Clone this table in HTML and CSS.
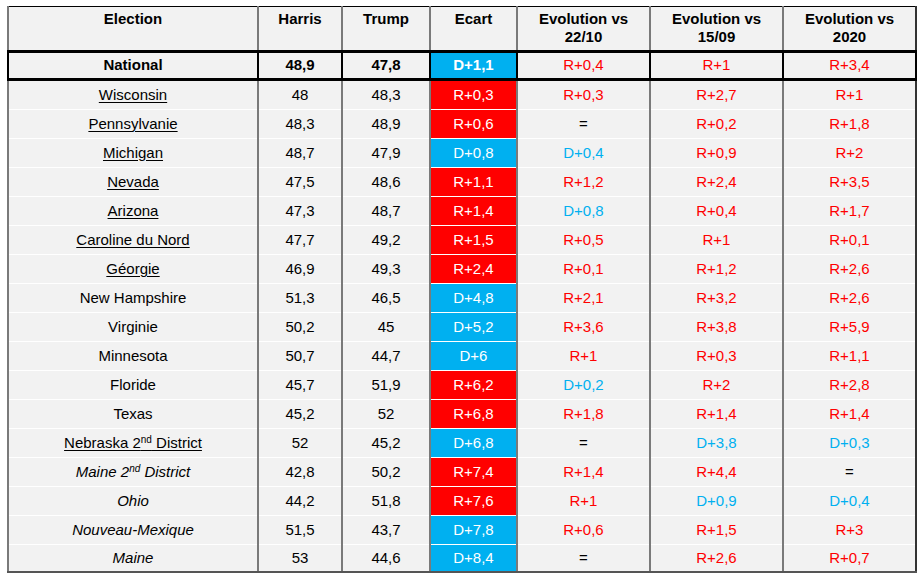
FILE: index.html
```html
<!DOCTYPE html>
<html lang="fr">
<head>
<meta charset="utf-8">
<title>Sondages</title>
<link rel="stylesheet" href="styles.css">
</head>
<body>
<table class="polls">
  <colgroup>
    <col class="c-name"><col class="c-h"><col class="c-t"><col class="c-e"><col class="c-v"><col class="c-v"><col class="c-v">
  </colgroup>
  <thead>
    <tr>
      <th>Election</th><th>Harris</th><th>Trump</th><th>Ecart</th>
      <th>Evolution vs<br>22/10</th><th>Evolution vs<br>15/09</th><th>Evolution vs<br>2020</th>
    </tr>
  </thead>
  <tbody>
    <tr class="national">
      <td>National</td><td>48,9</td><td>47,8</td><td class="gap d">D+1,1</td><td class="r">R+0,4</td><td class="r">R+1</td><td class="r">R+3,4</td>
    </tr>
    <tr><td><u>Wisconsin</u></td><td>48</td><td>48,3</td><td class="gap r">R+0,3</td><td class="r">R+0,3</td><td class="r">R+2,7</td><td class="r">R+1</td></tr>
    <tr><td><u>Pennsylvanie</u></td><td>48,3</td><td>48,9</td><td class="gap r">R+0,6</td><td>=</td><td class="r">R+0,2</td><td class="r">R+1,8</td></tr>
    <tr><td><u>Michigan</u></td><td>48,7</td><td>47,9</td><td class="gap d">D+0,8</td><td class="d">D+0,4</td><td class="r">R+0,9</td><td class="r">R+2</td></tr>
    <tr><td><u>Nevada</u></td><td>47,5</td><td>48,6</td><td class="gap r">R+1,1</td><td class="r">R+1,2</td><td class="r">R+2,4</td><td class="r">R+3,5</td></tr>
    <tr><td><u>Arizona</u></td><td>47,3</td><td>48,7</td><td class="gap r">R+1,4</td><td class="d">D+0,8</td><td class="r">R+0,4</td><td class="r">R+1,7</td></tr>
    <tr><td><u>Caroline du Nord</u></td><td>47,7</td><td>49,2</td><td class="gap r">R+1,5</td><td class="r">R+0,5</td><td class="r">R+1</td><td class="r">R+0,1</td></tr>
    <tr><td><u>Géorgie</u></td><td>46,9</td><td>49,3</td><td class="gap r">R+2,4</td><td class="r">R+0,1</td><td class="r">R+1,2</td><td class="r">R+2,6</td></tr>
    <tr><td>New Hampshire</td><td>51,3</td><td>46,5</td><td class="gap d">D+4,8</td><td class="r">R+2,1</td><td class="r">R+3,2</td><td class="r">R+2,6</td></tr>
    <tr><td>Virginie</td><td>50,2</td><td>45</td><td class="gap d">D+5,2</td><td class="r">R+3,6</td><td class="r">R+3,8</td><td class="r">R+5,9</td></tr>
    <tr><td>Minnesota</td><td>50,7</td><td>44,7</td><td class="gap d">D+6</td><td class="r">R+1</td><td class="r">R+0,3</td><td class="r">R+1,1</td></tr>
    <tr><td>Floride</td><td>45,7</td><td>51,9</td><td class="gap r">R+6,2</td><td class="d">D+0,2</td><td class="r">R+2</td><td class="r">R+2,8</td></tr>
    <tr><td>Texas</td><td>45,2</td><td>52</td><td class="gap r">R+6,8</td><td class="r">R+1,8</td><td class="r">R+1,4</td><td class="r">R+1,4</td></tr>
    <tr><td><u>Nebraska 2<sup>nd</sup> District</u></td><td>52</td><td>45,2</td><td class="gap d">D+6,8</td><td>=</td><td class="d">D+3,8</td><td class="d">D+0,3</td></tr>
    <tr><td><i>Maine 2<sup>nd</sup> District</i></td><td>42,8</td><td>50,2</td><td class="gap r">R+7,4</td><td class="r">R+1,4</td><td class="r">R+4,4</td><td>=</td></tr>
    <tr><td><i>Ohio</i></td><td>44,2</td><td>51,8</td><td class="gap r">R+7,6</td><td class="r">R+1</td><td class="d">D+0,9</td><td class="d">D+0,4</td></tr>
    <tr><td><i>Nouveau-Mexique</i></td><td>51,5</td><td>43,7</td><td class="gap d">D+7,8</td><td class="r">R+0,6</td><td class="r">R+1,5</td><td class="r">R+3</td></tr>
    <tr class="last"><td><i>Maine</i></td><td>53</td><td>44,6</td><td class="gap d">D+8,4</td><td>=</td><td class="r">R+2,6</td><td class="r">R+0,7</td></tr>
  </tbody>
</table>
</body>
</html>
```

FILE: styles.css
```css
html, body {
  margin: 0;
  padding: 0;
  background: #ffffff;
}

.polls {
  margin: 6px 0 0 7px;
  width: 910px;
  table-layout: fixed;
  border-collapse: collapse;
  font-family: "Liberation Sans", Arial, sans-serif;
  font-size: 15px;
  color: #000;
}

.c-name { width: 250px; }
.c-h { width: 84px; }
.c-t { width: 88px; }
.c-e { width: 87px; }
.c-v { width: 133px; }

.polls th,
.polls td {
  background: #f2f2f2;
  text-align: center;
  padding: 0;
  border-left: 2px solid #7a7a7a;
  border-right: 2px solid #7a7a7a;
}

.polls th:first-child,
.polls td:first-child {
  border-right: 1px solid #222;
}

.polls th:last-child,
.polls td:last-child {
  border-right: 2px solid #333;
}

.polls th {
  height: 40px;
  vertical-align: top;
  padding-top: 3px;
  line-height: 18px;
  font-weight: bold;
  border-top: 1px solid #000;
  border-bottom: 3px solid #000;
}

.polls td {
  height: 27px;
  padding-bottom: 1px;
  line-height: 18px;
  vertical-align: middle;
  border-bottom: 1px solid #ffffff;
}

.polls tr.national td {
  font-weight: bold;
  border: 2px solid #000;
  border-bottom: 3px solid #000;
  height: 24px;
}

.polls tr.national td.r { font-weight: normal; }

.polls tr.last td {
  height: 25px;
  border-bottom: 2px solid #555;
}

.polls td.r { color: #ff0000; }
.polls td.d { color: #00b0f0; }

.polls td.gap.r {
  background: #ff0000;
  color: #ffffff;
}
.polls td.gap.d {
  background: #00b0f0;
  color: #ffffff;
}

.polls u {
  text-decoration: underline;
  text-underline-offset: 2px;
  text-decoration-thickness: 1px;
}

.polls sup {
  font-size: 10px;
  line-height: 0;
  vertical-align: 5px;
}
```
